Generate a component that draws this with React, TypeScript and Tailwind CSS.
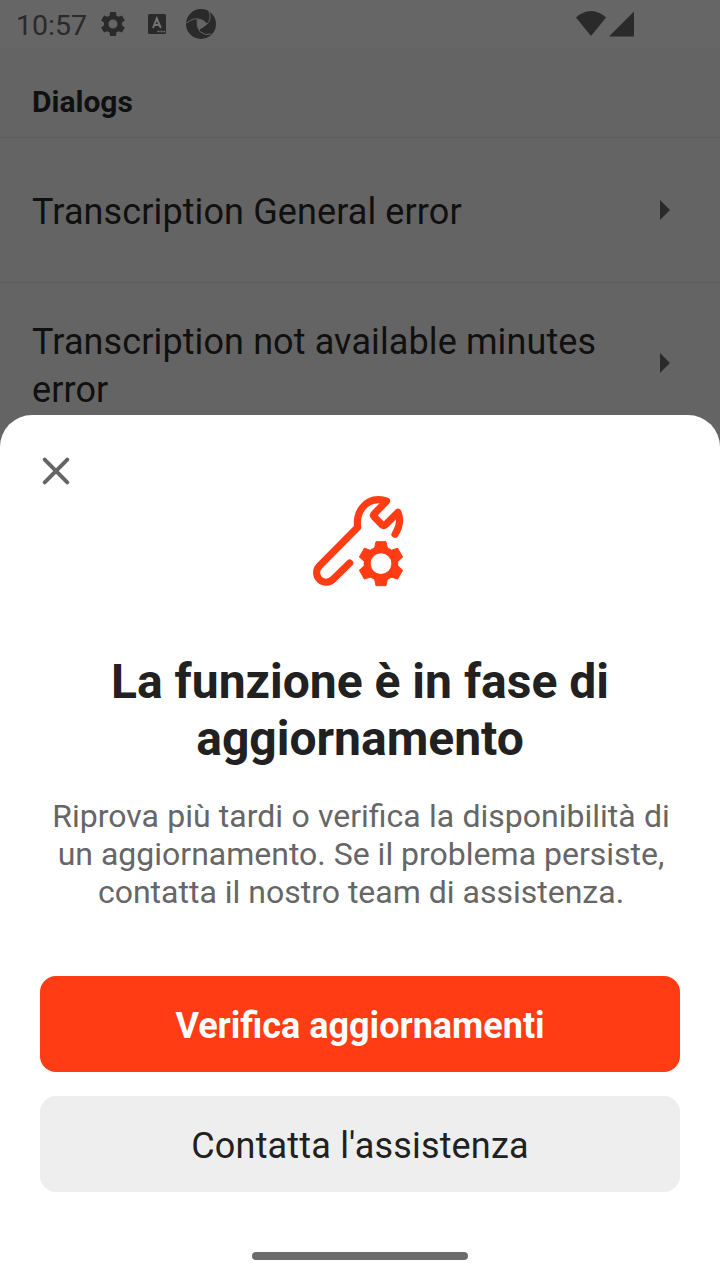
import React from 'react';

function GearIcon({ className }: { className?: string }) {
  return (
    <svg viewBox="0 0 24 24" className={className} fill="currentColor">
      <path d="M19.14 12.94c.04-.3.06-.61.06-.94 0-.32-.02-.64-.07-.94l2.03-1.58c.18-.14.23-.41.12-.61l-1.92-3.32c-.12-.22-.37-.29-.59-.22l-2.39.96c-.5-.38-1.03-.7-1.62-.94l-.36-2.54c-.04-.24-.24-.41-.48-.41h-3.84c-.24 0-.43.17-.47.41l-.36 2.54c-.59.24-1.13.57-1.62.94l-2.39-.96c-.22-.08-.47 0-.59.22L2.74 8.87c-.12.21-.08.47.12.61l2.03 1.58c-.05.3-.09.63-.09.94s.02.64.07.94l-2.03 1.58c-.18.14-.23.41-.12.61l1.92 3.32c.12.22.37.29.59.22l2.39-.96c.5.38 1.03.7 1.62.94l.36 2.54c.05.24.24.41.48.41h3.84c.24 0 .44-.17.47-.41l.36-2.54c.59-.24 1.13-.56 1.62-.94l2.39.96c.22.08.47 0 .59-.22l1.92-3.32c.12-.22.07-.47-.12-.61l-2.01-1.58zM12 15.6c-1.98 0-3.6-1.62-3.6-3.6s1.62-3.6 3.6-3.6 3.6 1.62 3.6 3.6-1.62 3.6-3.6 3.6z" />
    </svg>
  );
}

function StatusBar() {
  return (
    <div className="flex h-12 items-center bg-[#666666] pl-4 text-[#2a2a2a]">
      <span className="w-[72px] whitespace-nowrap pt-[4px] text-[28.5px] leading-[48px]">10:57</span>
      <GearIcon className="ml-[10px] size-[30px]" />
      <svg viewBox="0 0 20 22" className="ml-[19px] h-[22px] w-5">
        <rect x="1" y="1" width="18" height="20" rx="1.5" fill="currentColor" />
        <path d="M6 15 9.8 5.5 13.8 15M7.6 12h4.6" fill="none" stroke="#747474" strokeWidth="2" />
        <path d="M10.5 18.500h2m1 0h2m1 0h1.500" stroke="#747474" strokeWidth="1.5" />
      </svg>
      <svg viewBox="0 0 32 32" className="ml-[18px] size-8">
        <circle cx="16" cy="16" r="15" fill="currentColor" />
        <path d="M12.500 11 18 12.500 22 16 18 19.500 14 21.500 12.500 17Z" fill="#666666" />
        <path d="M1.500 15Q10 8 18 12.500L22 16M24 3Q27 11 22 16L14 21.500M12.500 11Q11 19 15.500 24Q20 28 26 26" fill="none" stroke="#666666" strokeWidth="1" />
      </svg>
      <svg viewBox="0 0 60 26" className="ml-[359px] h-[26px] w-[60px]" fill="currentColor">
        <path d="M0 6.500Q7 0 15 0T30 6.500L15 25Z" />
        <path d="M58 .5V25.500H33Z" />
      </svg>
    </div>
  );
}

function ListRow({ children, className }: { children: React.ReactNode; className: string }) {
  return (
    <div className={`flex justify-between border-b border-[#5c5c5c] pl-8 pr-[50px] ${className}`}>
      <span className="whitespace-nowrap text-[36px] leading-[48px] tracking-[0.11px]">{children}</span>
      <svg viewBox="0 0 10 20" className="h-5 w-[10px] self-center" fill="#2a2a2a">
        <path d="M0 0 10 10 0 20Z" />
      </svg>
    </div>
  );
}

function RepairIcon() {
  return (
    <svg viewBox="0 0 360 330" className="h-[110px] w-[120px]">
      <path
        d="M149 234 99 283A28 28 0 0 1 58 243L173 127C167 82 194 44 236 44Q250 44 260 48L223 86Q218 91 223 96L246 119Q252 124 258 118L294 82C303 105 298 128 285 148"
        fill="none" stroke="#ff3c13" strokeWidth="21.500" strokeLinecap="round" strokeLinejoin="round"
      />
      <g transform="translate(243 236)" fill="#ff3c13" stroke="#ff3c13">
        <circle r="41.500" fill="none" strokeWidth="21" />
        {[0, 60, 120, 180, 240, 300].map((angle) => (
          <path key={angle} transform={`rotate(${angle})`} d="M-15-66H15L20-42H-20Z" strokeWidth="3" strokeLinejoin="round" />
        ))}
      </g>
    </svg>
  );
}

export default function App() {
  return (
    <div className="relative h-[1280px] w-[720px] overflow-hidden bg-[#646464] font-['Roboto',sans-serif] text-[#101010]">
      <StatusBar />
      <h1 className="h-[90px] border-b border-[#5c5c5c] pl-8 pt-[34px] text-[30px] font-bold leading-10">Dialogs</h1>
      <ListRow className="h-[145px] pt-[50px] pb-[51px]">Transcription General error</ListRow>
      <ListRow className="h-[160px] pt-[35px] pb-[34px]">Transcription not available minutes<br />error</ListRow>
      <section role="dialog" className="absolute inset-x-0 bottom-0 flex h-[865px] flex-col items-center rounded-t-[32px] bg-white px-10 text-center text-[#212121]">
        <button aria-label="Chiudi" className="mt-10 size-8 self-start">
          <svg viewBox="0 0 32 32" className="size-8" fill="none" stroke="#666666" strokeWidth="4" strokeLinecap="round">
            <path d="M4.700 4.700 27.300 27.300M27.300 4.700 4.700 27.300" />
          </svg>
        </button>
        <div className="-mt-[2px]"><RepairIcon /></div>
        <h2 className="mt-[58px] whitespace-nowrap text-[48px] font-bold leading-[57px]">La funzione è in fase di<br />aggiornamento</h2>
        <p className="mt-[30px] whitespace-nowrap pl-[2px] text-[32px] leading-[38px] text-[#666666]"><span className="[word-spacing:0.35px]">Riprova più tardi o verifica la disponibilità di</span><br />un aggiornamento. Se il problema persiste,<br />contatta il nostro team di assistenza.</p>
        <button className="mt-[65px] h-24 w-full shrink-0 rounded-[16px] bg-[#ff3c13] pt-[4px] text-[36px] font-bold text-white">Verifica aggiornamenti</button>
        <button className="mt-6 h-24 w-full shrink-0 rounded-[16px] bg-[#eeeeee] pt-[4px] text-[36px] tracking-[0.18px]">Contatta l'assistenza</button>
        <div className="mt-[60px] h-2 w-[216px] shrink-0 rounded-full bg-[#6b6b6b]" />
      </section>
    </div>
  );
}
